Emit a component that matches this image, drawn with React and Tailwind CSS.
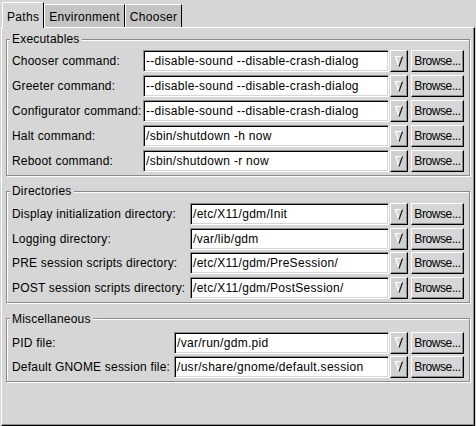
import React from 'react';

// GTK1-style gdmconfig "Paths" page
const executables = [
  ['Chooser command:', '--disable-sound --disable-crash-dialog'],
  ['Greeter command:', '--disable-sound --disable-crash-dialog'],
  ['Configurator command:', '--disable-sound --disable-crash-dialog'],
  ['Halt command:', '/sbin/shutdown -h now'],
  ['Reboot command:', '/sbin/shutdown -r now'],
];

const directories = [
  ['Display initialization directory:', '/etc/X11/gdm/Init'],
  ['Logging directory:', '/var/lib/gdm'],
  ['PRE session scripts directory:', '/etc/X11/gdm/PreSession/'],
  ['POST session scripts directory:', '/etc/X11/gdm/PostSession/'],
];

const misc = [
  ['PID file:', '/var/run/gdm.pid'],
  ['Default GNOME session file:', '/usr/share/gnome/default.session'],
];

const Arrow = () => (
  <svg width="10" height="13" viewBox="0 0 10 13">
    <polygon points="1.5,1.5 8.5,1.5 5,11.5" fill="#d6d6d6" />
    <polyline points="5,11.5 1.5,1.5 8.5,1.5" fill="none" stroke="#ffffff" strokeWidth="1.2" />
    <line x1="8.5" y1="1.5" x2="5" y2="11.5" stroke="#1a1a1a" strokeWidth="1.2" />
  </svg>
);

const Row = ({ label, value }) => (
  <>
    <div className="h-[22px] flex items-center whitespace-nowrap tracking-[0.2px]">{label}</div>
    <div className="h-[22px] bg-white border border-t-[#8c8c8c] border-l-[#8c8c8c] border-b-white border-r-white shadow-[inset_1px_1px_0_#000,inset_-1px_-1px_0_#d6d6d6] pl-[2px] flex items-center overflow-hidden whitespace-nowrap tracking-[0.3px]">
      {value}
    </div>
    <div className="h-[22px] ml-[1px] bg-[#d0d0d0] border border-t-white border-l-white border-b-black border-r-black shadow-[inset_-1px_-1px_0_#8c8c8c] flex items-center justify-center">
      <Arrow />
    </div>
    <div className="h-[22px] ml-[3px] bg-[#d6d6d6] border border-t-white border-l-white border-b-black border-r-black shadow-[inset_-1px_-1px_0_#8c8c8c] flex items-center justify-center whitespace-nowrap tracking-[-0.4px]">
      Browse...
    </div>
  </>
);

const Frame = ({ title, rows, labelWidth, className, pt, gap }) => (
  <fieldset
    className={`border border-[#8c8c8c] shadow-[inset_1px_1px_0_#fff,1px_1px_0_#fff] w-[464px] ${className}`}
  >
    <legend className="ml-[3px] px-[2px] leading-[14px] bg-[#d6d6d6] tracking-[0.2px]">{title}</legend>
    <div className={`px-[5px] pb-[3px] ${pt}`}>
      <div
        className={`grid ${gap}`}
        style={{ gridTemplateColumns: `${labelWidth}px 1fr 19px 56px` }}
      >
        {rows.map(([l, v]) => (
          <Row key={l} label={l} value={v} />
        ))}
      </div>
    </div>
  </fieldset>
);

export default function App() {
  return (
    <div className="w-[476px] h-[426px] bg-[#d6d6d6] flex flex-col overflow-hidden text-black text-[12px] font-['Liberation_Sans',Arial,sans-serif]">
      <div className="h-[27px] flex items-end pl-[2px] shrink-0">
        <div className="relative z-10 -mb-px h-[26px] bg-[#d6d6d6] border-l border-t border-r border-l-white border-t-white border-r-black px-[4px] pt-[5px] tracking-[0.3px]">
          Paths
        </div>
        <div className="h-[23px] bg-[#c4c4c4] border-l border-t border-r border-l-white border-t-white border-r-black px-[4px] pt-[3px] tracking-[0.3px]">
          Environment
        </div>
        <div className="h-[23px] bg-[#c4c4c4] border-l border-t border-r border-l-white border-t-white border-r-black px-[4px] pt-[3px] tracking-[0.3px]">
          Chooser
        </div>
      </div>
      <div className="ml-[1px] w-[474px] h-[399px] border-l border-t border-r border-b border-l-white border-t-white border-r-black border-b-black shadow-[inset_-1px_-1px_0_#8c8c8c] pl-[4px] pt-[4px]">
        <Frame title="Executables" rows={executables} labelWidth={131} pt="pt-[4px]" gap="gap-y-[3px]" className="" />
        <Frame title="Directories" rows={directories} labelWidth={178} pt="pt-[5px]" gap="gap-y-[2.5px]" className="mt-[8px]" />
        <Frame title="Miscellaneous" rows={misc} labelWidth={162} pt="pt-[6px]" gap="gap-y-[2px]" className="mt-[9px]" />
      </div>
    </div>
  );
}
